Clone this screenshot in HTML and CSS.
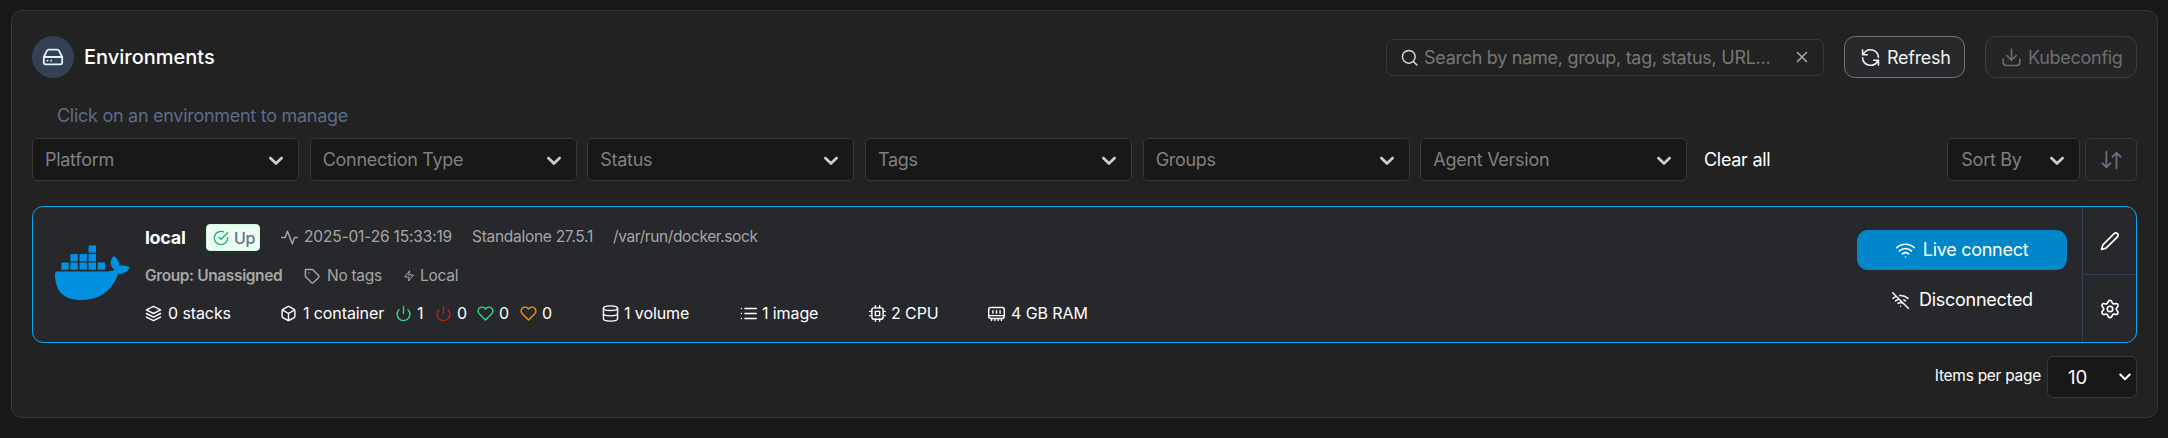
FILE: index.html
```html
<!DOCTYPE html>
<html lang="en">
<head>
<meta charset="utf-8">
<title>Environments</title>
<link rel="stylesheet" href="styles.css">
</head>
<body>
<svg class="defs" width="0" height="0" aria-hidden="true">
  <symbol id="chev" viewBox="0 0 20 20"><path fill="currentColor" d="M4.516 7.548c.436-.446 1.043-.481 1.576 0L10 11.295l3.908-3.747c.533-.481 1.141-.446 1.574 0 .436.445.408 1.197 0 1.615-.406.418-4.695 4.502-4.695 4.502a1.095 1.095 0 0 1-1.576 0S4.924 9.581 4.516 9.163s-.436-1.17 0-1.615z"/></symbol>
  <symbol id="power" viewBox="0 0 24 24"><path d="M18.36 6.64a9 9 0 1 1-12.73 0M12 2v10"/></symbol>
  <symbol id="heart" viewBox="0 0 24 24"><path d="M20.84 4.61a5.5 5.5 0 0 0-7.78 0L12 5.67l-1.06-1.06a5.5 5.5 0 0 0-7.78 7.78L12 21.23l8.84-8.84a5.5 5.5 0 0 0 0-7.78z"/></symbol>
</svg>
<main class="panel">
  <header class="head">
    <span class="badge"><svg class="i i22" viewBox="0 0 24 24"><path d="M22 12H2M5.45 5.11 2 12v6a2 2 0 0 0 2 2h16a2 2 0 0 0 2-2v-6l-3.45-6.89A2 2 0 0 0 16.76 4H7.24a2 2 0 0 0-1.79 1.11zM6 16h.01M10 16h.01"/></svg></span>
    <h1 class="title">Environments</h1>
    <div class="search">
      <svg class="i i17" viewBox="0 0 24 24"><circle cx="11" cy="11" r="9"/><path d="m22.500 22.500-5-5"/></svg>
      <span class="search-text">Search by name, group, tag, status, URL...</span>
      <svg class="i i18 clear-x" viewBox="0 0 24 24"><path d="M18 6 6 18M6 6l12 12"/></svg>
    </div>
    <button class="btn refresh"><svg class="i i19" viewBox="0 0 24 24"><path d="M2 2.5v6h6M22 21.500v-6h-6M22 11.500A10 10 0 0 0 3.200 7.500L2 8.500M2 12.500a10 10 0 0 0 18.800 4L22 15.500"/></svg><span>Refresh</span></button>
    <button class="btn kube"><svg class="i i19" viewBox="0 0 24 24"><path d="M1.500 14v4a4 4 0 0 0 4 4h13a4 4 0 0 0 4-4v-4M6 9.500l6 6 6-6M12 15.500V1.500"/></svg><span>Kubeconfig</span></button>
  </header>
  <p class="hint">Click on an environment to manage</p>
  <div class="filters">
    <div class="select">Platform<svg class="chev"><use href="#chev"/></svg></div>
    <div class="select">Connection Type<svg class="chev"><use href="#chev"/></svg></div>
    <div class="select">Status<svg class="chev"><use href="#chev"/></svg></div>
    <div class="select">Tags<svg class="chev"><use href="#chev"/></svg></div>
    <div class="select">Groups<svg class="chev"><use href="#chev"/></svg></div>
    <div class="select">Agent Version<svg class="chev"><use href="#chev"/></svg></div>
    <span class="clear">Clear all</span>
    <div class="select sort">Sort By<svg class="chev"><use href="#chev"/></svg></div>
    <div class="order"><svg class="i i22" viewBox="0 0 24 24"><path d="M7 3v17M2.500 15.500 7 20l4.500-4.500M18 21V4M13.500 8.500 18 4l4.500 4.500"/></svg></div>
  </div>
  <section class="card">
    <div class="logo"><svg class="whale" viewBox="0 0 75 55"><path d="M0 29Q0 26.500 2.500 26.500H52C55.500 26.500 58 25.800 59.500 24.800 54.500 20.500 54.600 15 58.800 11 62.500 13.500 64.500 17 64.300 20.800 67.500 20 71.500 20.300 74.500 22.200 73 26.500 69 29 63.300 28.800 56.500 46 45.500 55 26 55 7.500 55 0 45 0 29Z"/><path d="M6.300 17.500h7.400v7.200H6.300zM15.400 17.500h7.400v7.200h-7.400zM24.500 17.500h7.400v7.200h-7.400zM33.600 17.500H41v7.200h-7.400zM42.700 17.500h7.400v7.200h-7.400zM15.400 9h7.400v7.200h-7.400zM24.500 9h7.400v7.200h-7.400zM33.600 9H41v7.200h-7.400zM33.600.500H41v7.200h-7.400z"/></svg></div>
    <div class="info">
      <div class="row r1">
        <b class="name">local</b>
        <span class="up"><svg class="i i16" viewBox="0 0 24 24"><path d="M22 11.080V12a10 10 0 1 1-5.930-9.140M22 4 12 14.010l-3-3"/></svg>Up</span>
        <svg class="i i17" viewBox="0 0 24 24"><path d="M23 12h-4l-3 9L9 3l-3 9H1"/></svg>
        <span class="date">2025-01-26 15:33:19</span><span>Standalone 27.5.1</span><span class="sock">/var/run/docker.sock</span>
      </div>
      <div class="row r2">
        <b class="group">Group: Unassigned</b>
        <svg class="i i17" viewBox="0 0 24 24"><path d="m20.590 13.410-7.170 7.170a2 2 0 0 1-2.830 0L2 12V2h10l8.590 8.590a2 2 0 0 1 0 2.820zM7 7h.01"/></svg>
        <span>No tags</span>
        <svg class="i i12" viewBox="0 0 24 24"><path d="M13 2 3 14h9l-1 8 10-12h-9z"/></svg>
        <span>Local</span>
      </div>
      <div class="row r3">
        <svg class="i i17" viewBox="0 0 24 24"><path d="M12 2 2 7l10 5 10-5zM2 17l10 5 10-5M2 12l10 5 10-5"/></svg><span>0 stacks</span>
        <svg class="i i17" viewBox="0 0 24 24"><path d="M21 16V8a2 2 0 0 0-1-1.730l-7-4a2 2 0 0 0-2 0l-7 4A2 2 0 0 0 3 8v8a2 2 0 0 0 1 1.730l7 4a2 2 0 0 0 2 0l7-4A2 2 0 0 0 21 16zM3.270 6.960 12 12.010l8.730-5.050M12 22.080V12"/></svg><span>1 container</span>
        <svg class="i i17 green"><use href="#power"/></svg><span>1</span>
        <svg class="i i17 red"><use href="#power"/></svg><span>0</span>
        <svg class="i i17 green"><use href="#heart"/></svg><span>0</span>
        <svg class="i i17 orange"><use href="#heart"/></svg><span>0</span>
        <svg class="i i17" viewBox="0 0 24 24"><ellipse cx="12" cy="4.500" rx="10" ry="3.300"/><path d="M22 12c0 1.800-4.500 3.300-10 3.300S2 13.800 2 12M2 4.500v15c0 1.800 4.500 3.300 10 3.300s10-1.500 10-3.300v-15"/></svg><span>1 volume</span>
        <svg class="i i17" viewBox="0 0 24 24"><path d="M7 5h16M7 12h16M7 19h16M2 5h.01M2 12h.01M2 19h.01"/></svg><span>1 image</span>
        <svg class="i i17" viewBox="0 0 24 24"><rect x="4" y="4" width="16" height="16" rx="3"/><path d="M9 9h6v6H9zM9 1v3M15 1v3M9 20v3M15 20v3M20 9h3M20 15h3M1 9h3M1 15h3"/></svg><span>2 CPU</span>
        <svg class="i i17" viewBox="0 0 24 24"><rect x="1" y="3.500" width="22" height="15.500" rx="3"/><path d="M1.500 15h21M7 8v3.500M12 8v3.500M17 8v3.500M5 19v3M9.700 19v3M14.300 19v3M19 19v3"/></svg><span>4 GB RAM</span>
      </div>
    </div>
    <div class="connect">
      <button class="live"><svg class="i i19" viewBox="0 0 24 24"><path d="M1 8.500a16 16 0 0 1 22 0M4.500 12.500a11 11 0 0 1 15 0M8.200 16.300a6 6 0 0 1 7.600 0M12 20.300h.01"/></svg><span>Live connect</span></button>
      <div class="disc"><svg class="i i17" viewBox="0 0 24 24"><path d="m1 1 22 22M16.720 11.060A10.940 10.940 0 0 1 19 12.550M5 12.550a10.940 10.940 0 0 1 5.170-2.390M10.710 5.050A16 16 0 0 1 22.580 9M1.420 9a15.910 15.910 0 0 1 4.700-2.880M8.530 16.110a6 6 0 0 1 6.950 0M12 20h.01"/></svg><span>Disconnected</span></div>
    </div>
    <div class="actions">
      <div class="act"><svg class="i i20" viewBox="0 0 24 24"><path d="M17 3.200a2.700 2.700 0 0 1 3.900 3.800L7.300 20.500 1.800 22.200l1.600-5.500z"/></svg></div>
      <div class="act"><svg class="i i20" viewBox="0 0 24 24"><circle cx="12" cy="12" r="3.300"/><path d="M9.700 3.300a2.400 2.400 0 0 1 4.600 0l.4 1.200a2 2 0 0 0 2.500 1.300l1.500-.3a2.400 2.400 0 0 1 2.400 3.900l-1 1.200a2 2 0 0 0 0 2.800l1 1.200a2.400 2.400 0 0 1-2.400 3.900l-1.500-.3a2 2 0 0 0-2.500 1.300l-.4 1.200a2.400 2.400 0 0 1-4.600 0l-.4-1.200a2 2 0 0 0-2.500-1.300l-1.500.3a2.400 2.400 0 0 1-2.400-3.900l1-1.200a2 2 0 0 0 0-2.800l-1-1.200a2.400 2.400 0 0 1 2.400-3.900l1.500.3a2 2 0 0 0 2.500-1.300z"/></svg></div>
    </div>
  </section>
  <footer class="foot">
    <span>Items per page</span>
    <div class="count"><span>10</span><svg class="i i12" viewBox="0 0 12 12"><path d="m1.300 3.500 4.700 4.700 4.700-4.700"/></svg></div>
  </footer>
</main>
</body>
</html>
```
FILE: styles.css
```css
* { box-sizing: border-box; }
body { margin: 0; padding: 10px 10px 0 11px; height: 438px; overflow: hidden; background: #181818; color: #fff; font-family: Inter, "Liberation Sans", sans-serif; font-size: 18px; letter-spacing: -0.28px; line-height: 24px; white-space: nowrap; }
button { font: inherit; letter-spacing: inherit; padding: 0; }
.defs { display: block; }
.panel { height: 408px; border: 1px solid #383838; border-radius: 11px; background: #222; padding: 25px 20px 0 20px; }
.i { flex: none; display: block; fill: none; stroke: currentColor; stroke-width: 2; stroke-linecap: round; stroke-linejoin: round; }
.i12 { width: 12px; height: 12px; }
.i16 { width: 16px; height: 16px; }
.i17 { width: 17px; height: 17px; }
.i18 { width: 18px; height: 18px; }
.i19 { width: 19px; height: 19px; }
.i20 { width: 20px; height: 20px; }
.i22 { width: 22px; height: 22px; }
.head { display: flex; align-items: center; height: 42px; }
.badge { width: 42px; height: 42px; border-radius: 50%; background: #344054; color: #e0f2fe; display: flex; align-items: center; justify-content: center; }
.title { margin: 0 0 0 10px; font-size: 20px; font-weight: 500; letter-spacing: 0; }
.search { margin-left: auto; width: 438px; height: 37px; border: 1px solid #383838; border-radius: 7px; display: flex; align-items: center; padding: 0 12px 0 14px; color: #ddd; }
.search-text { margin-left: 6px; padding-top: 2px; color: #777; }
.clear-x { margin-left: auto; color: #aaa; }
.btn { height: 42px; border-radius: 11px; display: flex; align-items: center; gap: 7px; }
.btn span { padding-top: 2px; }
.refresh { width: 121px; margin-left: 20px; padding-left: 16px; color: #f2f2f2; background: #27292d; border: 1px solid #7b716d; }
.kube { width: 152px; margin-left: 20px; padding-left: 16px; color: #6d6d6d; background: #242527; border: 1px solid #403e3d; }
.hint { margin: 26px 0 10px 25px; color: #5d6b8a; }
.filters { display: flex; height: 43px; gap: 10.67px; }
.select { flex: none; width: 267px; height: 43px; border: 1px solid #383838; border-radius: 5px; background: #181818; color: #808080; display: flex; align-items: center; justify-content: space-between; padding: 0 10px 0 12px; }
.chev { width: 24px; height: 24px; margin-top: 1px; color: #ccc; }
.clear { margin-left: 6px; line-height: 43px; }
.sort { width: 133px; margin-left: auto; padding-left: 13px; }
.order { width: 52px; margin-left: -6px; border: 1px solid #383838; border-radius: 5px; color: #667085; display: flex; align-items: center; justify-content: center; }
.card { margin-top: 25px; height: 137px; border: 1px solid #0ba5ec; border-radius: 11px; background: #27282c; display: flex; overflow: hidden; }
.logo { width: 112px; padding: 38px 0 0 22px; }
.whale { display: block; width: 75px; height: 55px; fill: #0091e2; }
.info { flex: 1; padding-top: 16px; font-size: 15.5px; color: #a6a6a6; }
.row { display: grid; align-items: center; justify-content: start; }
.row span { padding-bottom: 1px; }
.r1 { height: 29px; grid-template-columns: 61px 75px 23px 168px 141px auto; }
.date { letter-spacing: -0.16px; }
.sock { letter-spacing: -0.4px; }
.r2 { height: 48px; grid-template-columns: 159px 23px 76px 17px auto; }
.r3 { height: 26px; color: #fff; font-size: 16px; letter-spacing: -0.1px; grid-template-columns: 23px 112px 23px 92px 22px 18px 22px 20px 22px 21px 22px 60px 22px 116px 22px 107px 22px 97px 23px auto; }
.name { color: #fff; font-size: 18px; font-weight: 700; }
.row .up { width: 54px; height: 27px; border: 1px solid #d1fadf; border-radius: 4px; background: #ecfdf3; color: #667085; font-size: 16px; font-weight: 500; display: flex; align-items: center; gap: 5px; padding: 0 0 0 6px; }
.up .i { color: #12b76a; }
.group { font-weight: 600; letter-spacing: -0.38px; }
.green { color: #32d583; }
.red { color: #b42318; }
.orange { color: #f79009; }
.connect { width: 225px; padding-top: 23px; }
.live { width: 210px; height: 40px; border: 0; border-radius: 11px; background: #0086c9; color: #fff; display: flex; align-items: center; justify-content: center; gap: 8px; }
.disc { width: 210px; margin-top: 18px; display: flex; align-items: center; padding-left: 35px; gap: 10px; }
.actions { width: 54px; border-left: 1px solid #344054; }
.act { height: 67px; display: flex; align-items: center; justify-content: center; }
.act + .act { height: 68px; border-top: 1px solid #344054; }
.foot { margin-top: 13px; display: flex; justify-content: flex-end; align-items: center; gap: 6px; height: 42px; font-size: 15.5px; }
.foot > span { padding-bottom: 2px; }
.count { width: 90px; height: 42px; border: 1px solid #383838; border-radius: 6px; background: #181818; display: flex; align-items: center; justify-content: space-between; padding: 0 5px 0 20px; font-size: 18.67px; letter-spacing: 0; }
.count span { padding-top: 1px; }
```
